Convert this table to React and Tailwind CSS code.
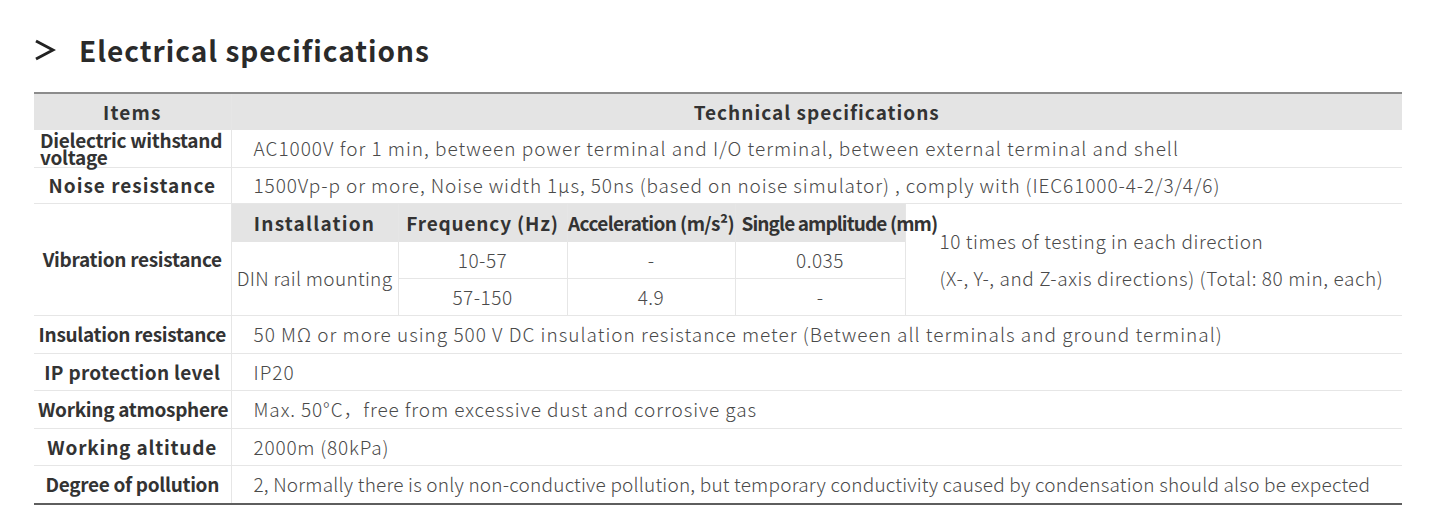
import React from "react";

const FONT = { fontFamily: '"Noto Sans CJK SC", "Noto Sans", sans-serif' };

// plain rows of the spec table (vibration row is built separately)
const topRows = [
  {
    label: "Noise resistance",
    track: "tracking-[1px]",
    valueTrack: "tracking-[0.9px]",
    text: "1500Vp-p or more, Noise width 1μs, 50ns (based on noise simulator) , comply with (IEC61000-4-2/3/4/6)",
  },
];

const bottomRows = [
  {
    label: "Insulation resistance",
    track: "tracking-[-0.3px]",
    text: "50 MΩ or more using 500 V DC insulation resistance meter (Between all terminals and ground terminal)",
  },
  { label: "IP protection level", track: "tracking-[0.3px]", text: "IP20" },
  {
    label: "Working atmosphere",
    track: "tracking-[-0.3px]",
    valueTrack: "tracking-[0.9px]",
    text: "Max. 50°C，free from excessive dust and corrosive gas",
  },
  { label: "Working altitude", track: "tracking-[0.8px]", valueTrack: "tracking-[0.8px]", text: "2000m (80kPa)" },
  {
    label: "Degree of pollution",
    track: "tracking-[-0.3px]",
    valueTrack: "tracking-[0.2px]",
    text: "2, Normally there is only non-conductive pollution, but temporary conductivity caused by condensation should also be expected",
  },
];

const LabelCell = ({ children, track = "" }) => (
  <td
    className={`border-r border-[#e6e6e6] px-1 text-center align-middle text-[19px] font-bold whitespace-nowrap text-[#333] ${track}`}
  >
    {children}
  </td>
);

const ValueCell = ({ children, track = "tracking-[1px]" }) => (
  <td className={`pl-[22px] align-middle text-[19px] font-light whitespace-nowrap text-[#4a4a4a] ${track}`}>{children}</td>
);

const VibrationBlock = () => (
  <div className="grid grid-cols-[167px_169px_168px_169px_1fr] grid-rows-[38px_37px_36px] text-[19px]">
    {/* nested header */}
    <div className="flex items-center justify-center border-r border-[#e6e6e6] bg-[#e4e4e4] font-bold tracking-[1.2px] text-[#333]">
      Installation
    </div>
    <div className="flex items-center justify-center border-r border-[#e6e6e6] bg-[#e4e4e4] font-bold tracking-[0.8px] whitespace-nowrap text-[#333]">
      Frequency (Hz)
    </div>
    <div className="flex items-center justify-center border-r border-[#e6e6e6] bg-[#e4e4e4] font-bold tracking-[-0.6px] whitespace-nowrap text-[#333]">
      Acceleration (m/s²)
    </div>
    <div className="relative z-10 flex items-center justify-start bg-[#e4e4e4] pl-[6px] font-bold tracking-[-0.9px] whitespace-nowrap text-[#333]">
      Single amplitude (mm)
    </div>
    <div className="row-span-3 flex flex-col justify-center border-l border-[#e6e6e6] pl-[34px] pb-[1px] font-light leading-[37px] tracking-[0.6px] text-[#4a4a4a]">
      <span>10 times of testing in each direction</span>
      <span>(X-, Y-, and Z-axis directions) (Total: 80 min, each)</span>
    </div>

    {/* nested body */}
    <div className="row-span-2 flex items-center justify-center border-r border-[#e6e6e6] font-light tracking-[0.3px] whitespace-nowrap text-[#4a4a4a]">
      DIN rail mounting
    </div>
    <div className="flex items-center justify-center border-r border-b border-[#e6e6e6] font-light tracking-[0.5px] text-[#4a4a4a]">10-57</div>
    <div className="flex items-center justify-center border-r border-b border-[#e6e6e6] font-light text-[#4a4a4a]">-</div>
    <div className="flex items-center justify-center border-b border-[#e6e6e6] font-light tracking-[0.5px] text-[#4a4a4a]">0.035</div>
    <div className="flex items-center justify-center border-r border-[#e6e6e6] font-light tracking-[0.5px] text-[#4a4a4a]">57-150</div>
    <div className="flex items-center justify-center border-r border-[#e6e6e6] font-light tracking-[0.5px] text-[#4a4a4a]">4.9</div>
    <div className="flex items-center justify-center font-light text-[#4a4a4a]">-</div>
  </div>
);

export default function App() {
  return (
    <div className="min-h-[523px] w-[1435px] bg-white pl-[34px] pr-[33px]" style={FONT}>
      {/* section title */}
      <div className="flex h-[92px] items-center gap-[23px] pt-[8px]">
        <svg width="22" height="22" viewBox="0 0 22 22">
          <polyline points="2,2 19,11 2,20" fill="none" stroke="#222" strokeWidth="3" strokeLinejoin="miter" />
        </svg>
        <h2 className="text-[28px] font-bold tracking-[1px] text-[#2a2a2a]">Electrical specifications</h2>
      </div>

      <table className="w-full table-fixed border-collapse border-t-2 border-b-2 border-t-[#8c8c8c] border-b-[#5e5e5e]">
        <colgroup>
          <col className="w-[197px]" />
          <col />
        </colgroup>
        <tbody>
          <tr className="h-[37px] bg-[#e4e4e4]">
            <td className="border-r border-[#e6e6e6] text-center text-[19px] font-bold tracking-[1.2px] text-[#333]">Items</td>
            <td className="text-center text-[19px] font-bold tracking-[1px] text-[#333]">Technical specifications</td>
          </tr>
          <tr className="h-[37px] border-b border-[#e6e6e6]">
            <td className="border-r border-[#e6e6e6] pl-[6px] text-left align-middle text-[19px] leading-[17px] font-bold tracking-[-0.3px] text-[#333]">
              Dielectric withstand
              <br />
              voltage
            </td>
            <ValueCell>AC1000V for 1 min, between power terminal and I/O terminal, between external terminal and shell</ValueCell>
          </tr>
          {topRows.map((r) => (
            <tr key={r.label} className="h-[36.5px] border-b border-[#e6e6e6]">
              <LabelCell track={r.track}>{r.label}</LabelCell>
              <ValueCell track={r.valueTrack}>{r.text}</ValueCell>
            </tr>
          ))}
          <tr className="border-b border-[#e6e6e6]">
            <LabelCell track="tracking-[-0.3px]">Vibration resistance</LabelCell>
            <td className="p-0">
              <VibrationBlock />
            </td>
          </tr>
          {bottomRows.map((r, i) => (
            <tr
              key={r.label}
              className={i < bottomRows.length - 1 ? "h-[37.5px] border-b border-[#e6e6e6]" : "h-[38px]"}
            >
              <LabelCell track={r.track}>{r.label}</LabelCell>
              <ValueCell track={r.valueTrack}>{r.text}</ValueCell>
            </tr>
          ))}
        </tbody>
      </table>
    </div>
  );
}
